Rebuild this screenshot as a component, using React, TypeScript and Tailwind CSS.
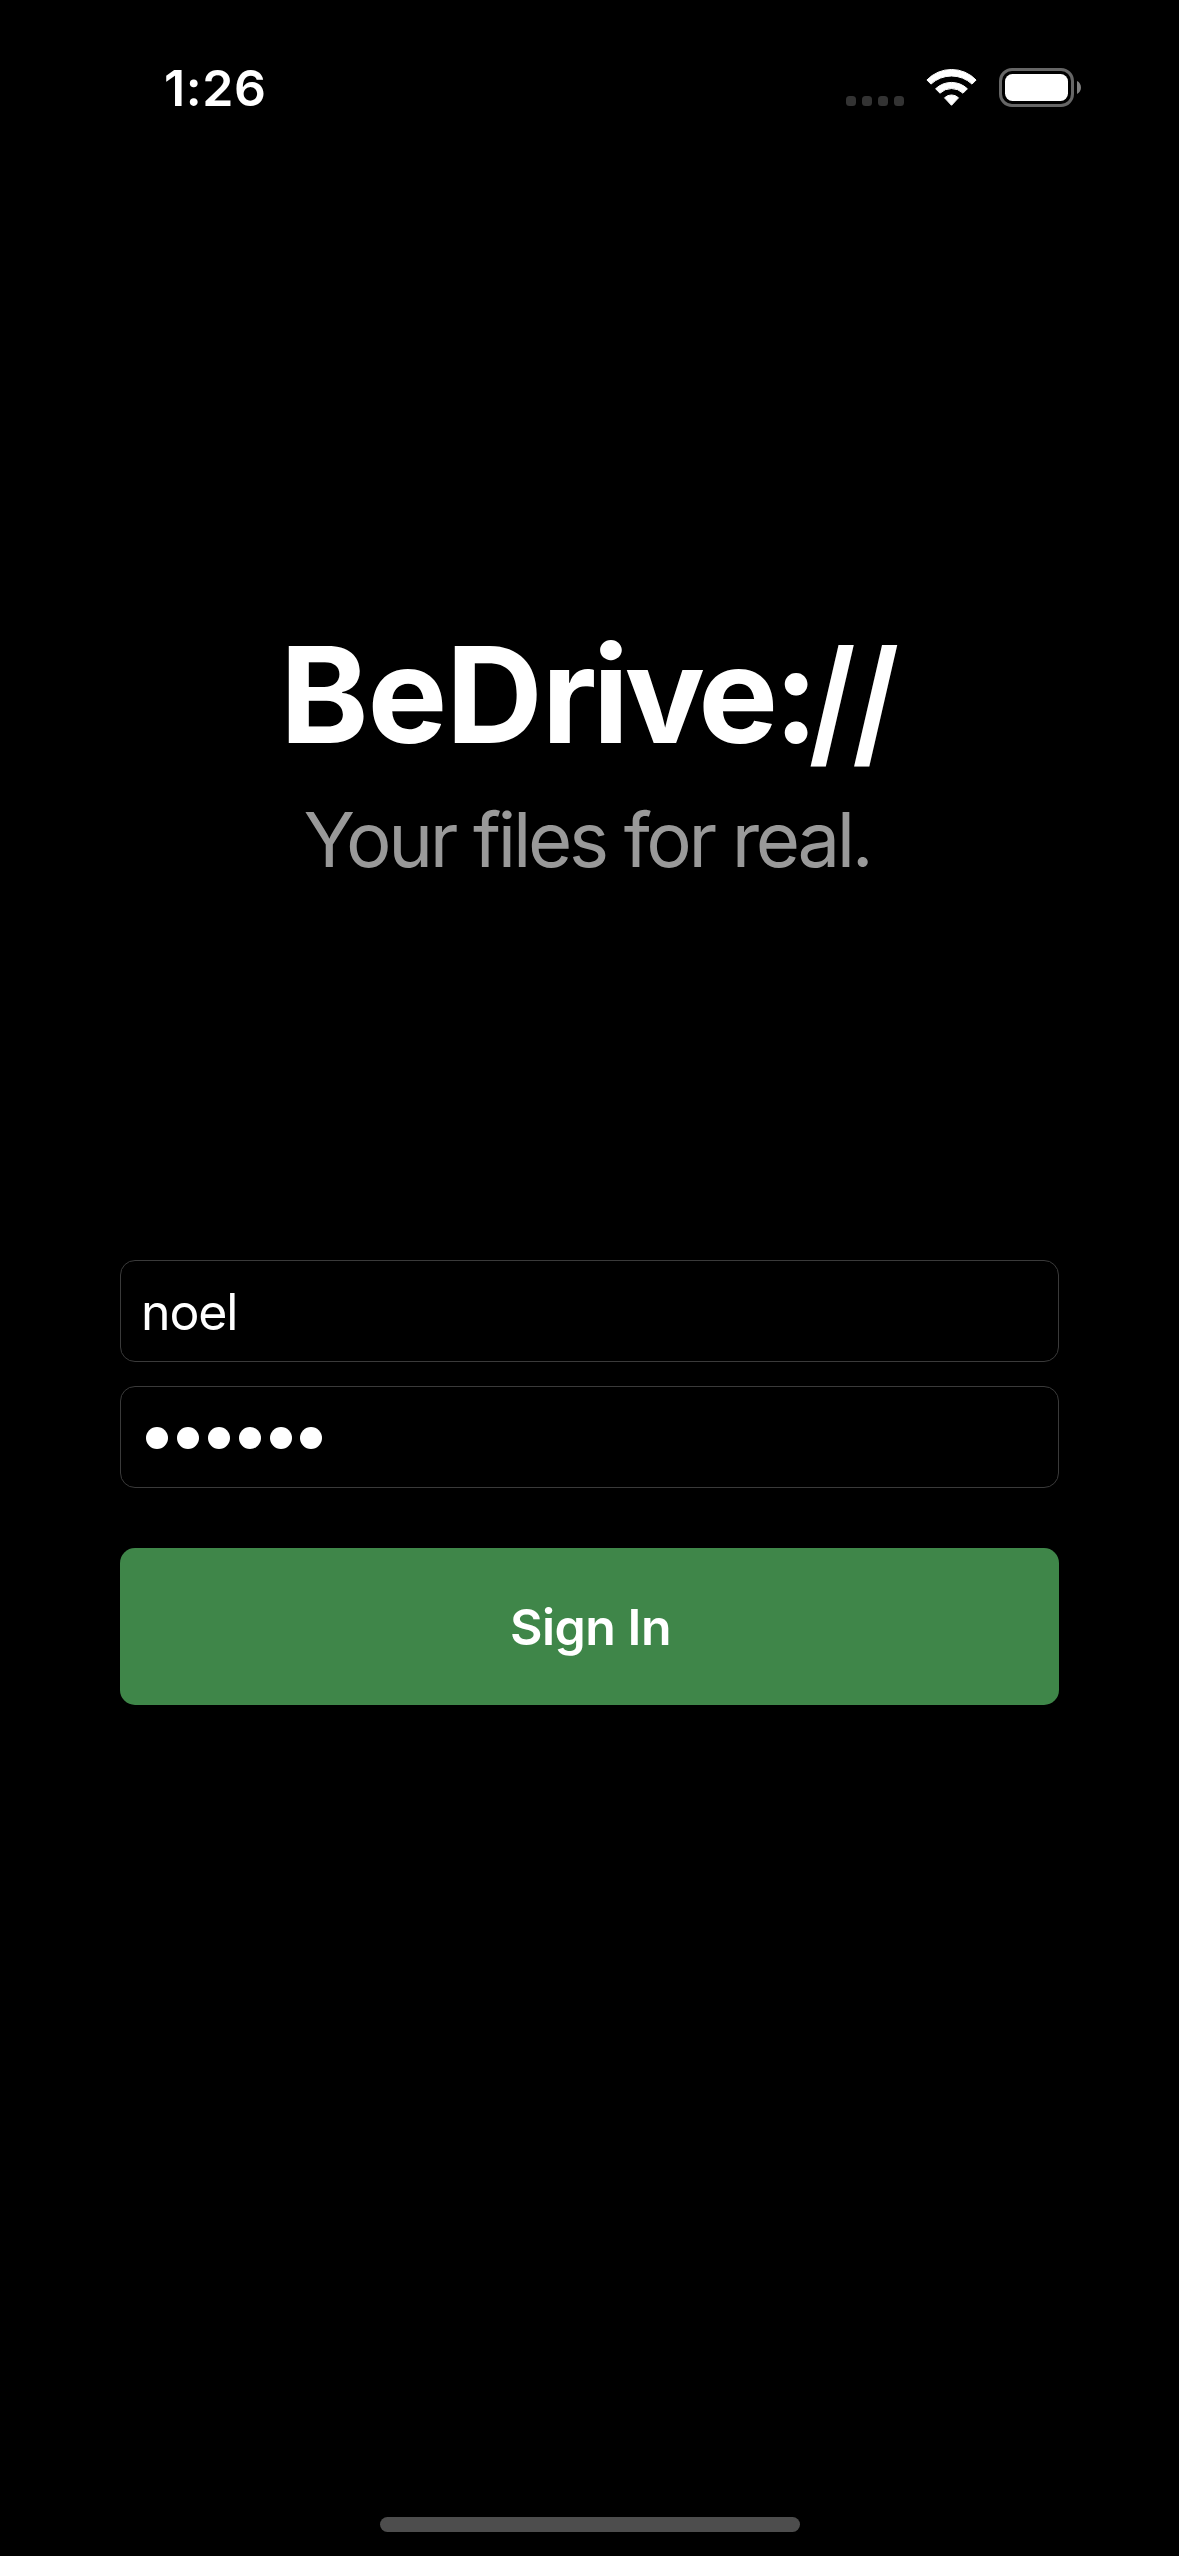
function StatusBar() {
  return (
    <header className="flex h-[176px] shrink-0 justify-between pl-[164px] pr-[98px]">
      <time className="mt-[58px] h-[60px] text-[50px] font-semibold leading-[60px] tracking-[0.6px]">1:26</time>
      <div className="mt-[68px] flex h-[39px] items-start">
        <div className="mt-[28px] flex gap-[6px]">
          {[0, 1, 2, 3].map((n) => (
            <span key={n} className="size-[10px] rounded-[3.5px] bg-[#333333]" />
          ))}
        </div>
        <svg className="ml-[21px]" width="53" height="39" viewBox="0 0 53 39" fill="#fff" stroke="#fff" strokeWidth="1" strokeLinejoin="round" aria-label="Wi-Fi">
          <path d="M1.9 12 A34 34 0 0 1 51.1 12 L47 16.1 A30 30 0 0 0 6 16.1 Z" />
          <path d="M10.6 20.8 A23 23 0 0 1 42.4 20.8 L38 25.2 A16.5 16.5 0 0 0 15 25.2 Z" />
          <path d="M19.5 29.8 A10 10 0 0 1 33.5 29.8 L26.5 37.3 Z" />
        </svg>
        <svg className="ml-[21px]" width="82" height="39" viewBox="0 0 82 39" aria-label="Battery">
          <rect x="1.5" y="1.5" width="72" height="36" rx="11.5" fill="none" stroke="#666" strokeWidth="3" />
          <rect x="6" y="6" width="63" height="27" rx="7.5" fill="#fff" />
          <path d="M78 13 C83.3 15.3 83.3 23.7 78 26 Z" fill="#808080" />
        </svg>
      </div>
    </header>
  );
}

export default function App() {
  return (
    <div className="flex h-[2556px] w-[1179px] flex-col bg-black font-['Inter',sans-serif] text-white">
      <StatusBar />
      <main className="flex flex-1 flex-col px-[120px] pt-[438px]">
        <h1 className="whitespace-nowrap pl-[160px] text-left text-[134px] font-bold leading-[160px] tracking-[-4.4px]">
          <span className="tracking-[-1.2px]">BeD</span>rive:
          <span className="ml-[-5px] inline-block origin-left translate-y-[6px] scale-x-[0.89] scale-y-[1.04] tracking-[-3px]">//</span>
        </h1>
        <p className="mt-[20px] pr-[5px] text-center text-[76px] leading-[90px] tracking-[-3.35px] text-[#999999]">Your files for real.</p>
        <form className="mt-[376px] flex flex-col" onSubmit={(e) => e.preventDefault()}>
          <div className="flex h-[102px] items-center rounded-[15px] border border-[#3a3a3a] px-[20px] pt-[1px] text-[50px] leading-[60px] tracking-[-1.1px]">
            noel
          </div>
          <div className="mt-[24px] flex h-[102px] items-center gap-[8.9px] rounded-[15px] border border-[#3a3a3a] px-[25px] pt-[2px]" aria-label="Password">
            {[0, 1, 2, 3, 4, 5].map((n) => (
              <span key={n} className="size-[22px] rounded-full bg-white" />
            ))}
          </div>
          <button className="mt-[60px] h-[157px] rounded-[15px] bg-[#3f8649] pl-[2px] text-[50px] font-semibold leading-[60px] tracking-[-0.5px]">
            Sign In
          </button>
        </form>
      </main>
      <footer className="flex h-[39px] justify-center">
        <div className="h-[15px] w-[420px] rounded-full bg-[#4d4d4d]" />
      </footer>
    </div>
  );
}
